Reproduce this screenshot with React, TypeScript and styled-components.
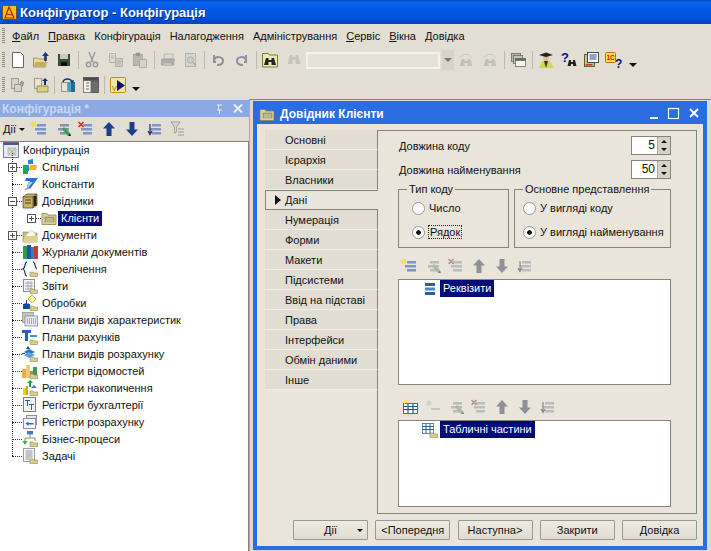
import React from 'react';
import styled, { createGlobalStyle } from 'styled-components';

const Global = createGlobalStyle`
  html, body { margin: 0; padding: 0; overflow: hidden; background: #e2ded4; }
  * { box-sizing: border-box; }
`;

const UI_FONT = `"Liberation Sans", Arial, sans-serif`;

const Corner = () => <path d="M8 11h3l1 1h3.500v3.500H8z" fill="#d8cd8c" stroke="#8f8a58" strokeWidth=".6" />;
const Bars = ({ c = '#7f94c8' }: { c?: string }) => (
  <g fill={c}>
    <rect x="5" y="3" width="9" height="2.500" />
    <rect x="3" y="7" width="11" height="2.500" />
    <rect x="5" y="11" width="9" height="2.500" />
  </g>
);

const glyphs: Record<string, React.ReactNode> = {
  // toolbar
  new: <path d="M2.500 0.500h8l3 3v12h-11z" fill="#fff" stroke="#666" />,
  open: (
    <g>
      <path d="M0.500 6h4l1 1h7v8H0.500z" fill="#e8d890" stroke="#8a7a40" strokeWidth=".7" />
      <path d="M0.500 15l2-5h12l-2 5z" fill="#c4b060" />
      <path d="M12.500 0l3.500 4h-2.200v5h-2.600V4H9z" fill="#123a78" />
    </g>
  ),
  save: (
    <g>
      <rect x="2" y="2" width="12" height="12" fill="#3c4a38" />
      <rect x="4" y="2" width="8" height="5" fill="#c8ccb8" />
      <rect x="5" y="10" width="6" height="4" fill="#111" />
    </g>
  ),
  cut: (
    <g fill="none" stroke="#9a9a9a" strokeWidth="1.400">
      <path d="M5 0l4 10M11 0l-4 10" />
      <circle cx="4.500" cy="12.500" r="2.200" />
      <circle cx="11.500" cy="12.500" r="2.200" />
    </g>
  ),
  copy: (
    <g fill="#dedad0" stroke="#a8a8a0" strokeWidth=".8">
      <path d="M1.500 1.500h6v9h-6z" />
      <path d="M7.500 6.500h7v8h-7z" fill="#c8c8c0" />
      <path d="M3 4h3M3 6h3M9 9h4M9 11h4" stroke="#aaa" />
    </g>
  ),
  paste: (
    <g stroke="#a2a29a" strokeWidth=".8">
      <rect x="1.500" y="2.500" width="9" height="11" fill="#b8b8ac" />
      <rect x="4" y="1" width="4" height="3" fill="#8e8e86" />
      <path d="M7.500 7.500h7v8h-7z" fill="#d4d4cc" />
    </g>
  ),
  print: (
    <g stroke="#a4a49c" strokeWidth=".7">
      <path d="M4 2h9v5H4z" fill="#dedad2" />
      <path d="M1.500 7h13l-1 6h-12z" fill="#aeaea8" />
      <rect x="3" y="11" width="9" height="2" fill="#d4d4cc" />
    </g>
  ),
  preview: (
    <g stroke="#a8a8a0" strokeWidth=".8">
      <path d="M2.500 1.500h10v13h-10z" fill="#d8d6cc" />
      <circle cx="7.500" cy="8" r="3.200" fill="#c6ccd0" />
      <path d="M10 10.500l3 3" strokeWidth="1.400" />
    </g>
  ),
  undo: <path d="M4 3v7h2M4 8c1-4 9-4 9 1 0 3-3 4-6 4" fill="none" stroke="#8a90a0" strokeWidth="2" />,
  redo: <path d="M12 3v7h-2M12 8c-1-4-9-4-9 1 0 3 3 4 6 4" fill="none" stroke="#8a90a0" strokeWidth="2" />,
  findFolder: (
    <g>
      <path d="M0.500 1.500h6l1 1.500h8v12h-15z" fill="#eeeaa0" stroke="#7a7a3a" />
      <path d="M4 6h2.500v7H2zM9.500 6H12l2 7H9.500zM6.500 8h3v2h-3z" fill="#223" />
    </g>
  ),
  binoc: <path d="M4 3h2.500v9H1.500zM9.500 3H12l2.500 9h-5zM6.500 5h3v3h-3z" fill="#aaa" />,
  findPrev: (
    <g>
      <path d="M4 7h2.500v7H1.500zM9.500 7H12l2.500 7h-5zM6.500 9h3v2h-3z" fill="#a2a29a" />
      <path d="M1.500 6c3-5 10-5 13 0" fill="none" stroke="#b0b0a8" />
    </g>
  ),
  windows: (
    <g stroke="#6a6a66" strokeWidth=".8">
      <rect x="1.500" y="1.500" width="9" height="8" fill="#b8b8b0" />
      <rect x="3.500" y="3.500" width="9" height="8" fill="#c4c4bc" />
      <rect x="5.500" y="6.500" width="10" height="8" fill="#f4f4ee" />
      <rect x="5.500" y="6.500" width="10" height="2" fill="#66665e" />
    </g>
  ),
  student: (
    <g>
      <path d="M1 16l3-7h8l4 7z" fill="#d8d840" />
      <path d="M6 9l2 7 2-7z" fill="#334" />
      <circle cx="8" cy="6" r="3" fill="#e8b890" />
      <path d="M1 3l7-2.500L15 3 8 5z" fill="#222" />
    </g>
  ),
  helpBinoc: (
    <g>
      <text x="0" y="10" fontFamily="Liberation Sans" fontWeight="700" fontSize="13" fill="#101080">?</text>
      <path d="M8 8h2v6H6.500zM12 8h2l1.500 6H12zM10 10h2v2h-2z" fill="#222" />
    </g>
  ),
  helpDoc: (
    <g>
      <rect x="1.500" y="2.500" width="10" height="12" fill="#c4c090" stroke="#60603a" />
      <rect x="4.500" y="0.500" width="11" height="10" fill="#fff" stroke="#222" strokeWidth=".8" />
      <path d="M6.500 3h7M6.500 5h7M6.500 7h7" stroke="#2040a0" />
      <rect x="2.500" y="12" width="7" height="1.600" fill="#c04030" />
    </g>
  ),
  help1c: (
    <g>
      <rect x="0.500" y="0.500" width="10" height="10" rx="1" fill="#fbe23c" stroke="#c07020" />
      <text x="1.500" y="8" fontFamily="Liberation Sans" fontWeight="700" fontSize="6.500" fill="#d01010">1C</text>
      <text x="10" y="15.500" fontFamily="Liberation Sans" fontWeight="700" fontSize="12" fill="#101080">?</text>
    </g>
  ),
  config2a: (
    <g stroke="#8c8c84" strokeWidth=".8" fill="#d4d4c8">
      <path d="M1.500 1.500h7v10h-7z" />
      <path d="M4.500 7.500h7v7h-7z" />
      <path d="M12 4l2 2h-1v3h-2V6h-1z" fill="#a8a898" />
    </g>
  ),
  config2b: (
    <g>
      <path d="M1.500 1.500h7v10h-7z" fill="#e8e4d0" stroke="#8c8c84" strokeWidth=".8" />
      <path d="M4 9h11v6H4z" fill="#dccf80" stroke="#7a7440" strokeWidth=".7" />
      <path d="M12 1l3 3h-2v4h-2V4H9z" fill="#12306c" />
    </g>
  ),
  refresh: (
    <g>
      <rect x="1.500" y="5.500" width="6" height="9" fill="#e8e4d0" stroke="#777" strokeWidth=".7" />
      <rect x="8" y="5" width="7" height="10" fill="#4a9fc4" />
      <rect x="11" y="5" width="4" height="10" fill="#1c6e9c" />
      <path d="M3 5c1-4 8-4 9 0" fill="none" stroke="#123a78" strokeWidth="1.400" />
      <path d="M10 4l3 2 1-3z" fill="#123a78" />
    </g>
  ),
  form: (
    <g stroke="#555" strokeWidth=".7">
      <rect x="0.500" y="0.500" width="15" height="15" fill="#f2f2ea" />
      <rect x="0.500" y="0.500" width="15" height="3" fill="#4a4a54" />
      <rect x="8" y="4" width="7.500" height="11.500" fill="#6e6e6a" />
      <path d="M3 6h3M3 9h3M3 12h3" stroke="#333" />
    </g>
  ),
  play: (
    <g>
      <rect x="0.500" y="0.500" width="15" height="15" rx="1" fill="#f2e6a0" stroke="#c08a20" />
      <text x="2" y="14" fontFamily="Liberation Sans" fontSize="7" fill="#a06020">V</text>
      <path d="M7 3l8 5.500L7 14z" fill="#101070" />
    </g>
  ),
  // list editing
  add: (
    <g>
      <Bars />
      <path d="M1 0.500l1 1.500 1.800-.5-.8 1.800 1 1.500-2-.2-1 1.500-.4-2L-1.500 3.500 0.500 3z" fill="#f8ec40" stroke="#e8c820" strokeWidth=".4" />
    </g>
  ),
  edit: (
    <g>
      <Bars c="#8490b0" />
      <path d="M7 8l2-2 6 6-2 3z" fill="#3aa050" />
      <path d="M13 15l2-3 1 3z" fill="#222" />
    </g>
  ),
  del: (
    <g>
      <Bars />
      <path d="M0.500 1l5 5M5.500 1l-5 5" stroke="#e02818" strokeWidth="1.600" />
    </g>
  ),
  up: <path d="M8 1l6 6.500h-3.500V15h-5V7.500H2z" fill="#1c3f88" />,
  down: <path d="M8 15l6-6.500h-3.500V1h-5v7.500H2z" fill="#1c3f88" />,
  move: (
    <g>
      <Bars />
      <path d="M3 3v9M1 10l2 3.500L5 10" fill="none" stroke="#20305c" strokeWidth="1.200" />
    </g>
  ),
  filter: (
    <g>
      <path d="M1 1h9L6.500 6v5l-2 1V6z" fill="#d8d8d0" stroke="#8a8a84" strokeWidth=".7" />
      <path d="M8 8h6M8 11h6M8 14h6" stroke="#9a9a94" strokeWidth="1.200" />
    </g>
  ),
  attrs: (
    <g>
      <rect x="3" y="2" width="10" height="3" fill="#2c5d9c" />
      <rect x="3" y="6.500" width="10" height="3" fill="#5488c0" />
      <rect x="3" y="11" width="10" height="3" fill="#2c5d9c" />
    </g>
  ),
  addTable: (
    <g>
      <rect x="1.500" y="4.500" width="14" height="10" fill="#fff" stroke="#3a6ea8" />
      <path d="M1.500 7.500h14M1.500 10.500h14M6 4.500v10M11 4.500v10" stroke="#1c5a98" strokeWidth="1.200" />
      <path d="M2.500 0l1 1.500 1.800-.5-.8 1.800 1 1.500-2-.2-1 1.500-.4-2-1.800-.5 2-.6z" fill="#f8ec40" />
    </g>
  ),
  addSmall: (
    <g>
      <circle cx="4" cy="4" r="2.500" fill="#bcbcb4" />
      <rect x="6" y="9" width="9" height="2" fill="#a8a8a0" />
    </g>
  ),
  tables: (
    <g>
      <rect x="0.500" y="1.500" width="11" height="10" fill="#fff" stroke="#3a6ea8" strokeWidth=".8" />
      <path d="M0.500 4.500h11M0.500 7.500h11M4 1.500v10M8 1.500v10" stroke="#2a5c98" />
      <Corner />
    </g>
  ),
  // tree
  root: (
    <g>
      <rect x="0.500" y="0.500" width="15" height="15" fill="#e8ecf4" stroke="#7e7e96" />
      <rect x="0.500" y="0.500" width="15" height="2.500" fill="#54548c" />
      <path d="M5 6h8v7H5z" fill="#d6dce6" stroke="#9a9ab0" strokeWidth=".6" />
      <path d="M6 12l6-5M6 7l6 5" stroke="#c8b050" />
    </g>
  ),
  common: (
    <g>
      <path d="M6 1l5-1v5H6z" fill="#2f82d0" />
      <path d="M1 6h6v6H1z" fill="#2a9aa0" />
      <path d="M1 9h5v6H1z" fill="#30a040" />
      <path d="M8 6h7l-1 5H7z" fill="#f0b818" />
    </g>
  ),
  constant: (
    <g>
      <path d="M4 2h12l-8 11-3-3 3-5H3z" fill="#2a72c8" />
      <path d="M6 6h5l-5 6z" fill="#9cc8f0" />
      <path d="M2 14l4-3 1 2z" fill="#7a8ea8" />
    </g>
  ),
  catalog: (
    <g>
      <path d="M1 4l4-3h10v11l-4 3H1z" fill="#c8b26a" stroke="#4a3c18" strokeWidth=".7" />
      <path d="M11 15V4H1M11 4l4-3" fill="none" stroke="#4a3c18" strokeWidth=".7" />
      <rect x="11.500" y="3" width="3" height="10" fill="#2a2414" />
      <path d="M3 7h6M3 10h6" stroke="#4a3c18" />
    </g>
  ),
  client: (
    <g>
      <path d="M1 3.500h5l1 1.500h8v9.500H1z" fill="#dcd28e" stroke="#8a8448" strokeWidth=".8" />
      <rect x="4" y="7" width="9" height="5" fill="#a4a474" stroke="#777" strokeWidth=".4" />
      <path d="M5 9h7M5 11h7" stroke="#e8e4c8" strokeWidth=".7" />
    </g>
  ),
  doc: (
    <g>
      <path d="M1 5h5l1 1h8v9H1z" fill="#c8bc70" stroke="#8a8448" strokeWidth=".6" />
      <path d="M3 9l6-6 5 4-2 4z" fill="#f8f8f0" stroke="#aaa" strokeWidth=".5" />
      <path d="M1 15l2-6h12v6z" fill="#dcd28e" />
    </g>
  ),
  journal: (
    <g>
      <rect x="1" y="2" width="4" height="13" fill="#2e9a50" />
      <rect x="5" y="1" width="4" height="14" fill="#2050b0" />
      <rect x="9" y="3" width="3" height="12" fill="#4078c8" />
      <rect x="12" y="2" width="4" height="13" fill="#c83c38" />
    </g>
  ),
  enum: (
    <g>
      <path d="M5 1C2 1 4 7 1 8c3 1 1 7 4 7M11 1c3 0 1 6 4 7" fill="none" stroke="#20305c" strokeWidth="1.200" />
      <Corner />
    </g>
  ),
  report: (
    <g>
      <rect x="1.500" y="1.500" width="11" height="12" fill="#f2f2ee" stroke="#8c8ca4" />
      <path d="M3 5h8M3 8h8M3 11h8M6 3v9M9 3v9" stroke="#a8a8c0" />
      <Corner />
    </g>
  ),
  process: (
    <g>
      <path d="M10 0l4 4-4 4-4-4z" fill="#fcf4b0" stroke="#c8b040" />
      <rect x="1" y="9" width="7" height="5" fill="#1848a8" />
      <path d="M4.500 5v5M2.500 8l2 2 2-2" fill="none" stroke="#1848a8" />
      <Corner />
    </g>
  ),
  charPlan: (
    <g>
      <rect x="0.500" y="0.500" width="11" height="10" fill="#c8c8c0" stroke="#8a8a84" strokeWidth=".7" />
      <rect x="3" y="4" width="12.500" height="10" fill="#e8eaf0" stroke="#6c7ca4" strokeWidth=".7" />
      <path d="M5 7h9M5 9h9M5 11h9" stroke="#6a6a84" strokeDasharray="1 1" />
    </g>
  ),
  accounts: (
    <g>
      <path d="M0 1h9v3H6v8H3V4H0z" fill="#2860b8" />
      <path d="M8 6h7v2H8z" fill="#3a98c8" />
      <Corner />
    </g>
  ),
  calc: (
    <g>
      <path d="M2 6l5-3 6 3-6 3z" fill="#2c78c8" />
      <path d="M2 9l5-3 6 3-6 3z" fill="#5aa0e0" />
      <path d="M6 0l2 3H4zM0 7h3v1H0z" fill="#2c5090" />
      <Corner />
    </g>
  ),
  regInfo: (
    <g>
      <rect x="0" y="6" width="4" height="9" fill="#f2a850" />
      <rect x="4" y="2" width="4" height="13" fill="#f8c878" />
      <rect x="8" y="8" width="3" height="7" fill="#6ab060" />
      <rect x="11" y="4" width="4" height="11" fill="#3c9850" />
      <Corner />
    </g>
  ),
  regAcc: (
    <g>
      <path d="M8 0l3 3H9v4H7V3H5z" fill="#20a040" />
      <rect x="1" y="8" width="3" height="7" fill="#e8d020" />
      <rect x="4" y="6" width="2" height="9" fill="#c8a820" />
      <path d="M12 5l3 3h-6z" fill="#3a7ac0" />
      <Corner />
    </g>
  ),
  regBook: (
    <g>
      <rect x="1.500" y="0.500" width="12" height="14" fill="#f2f2f2" stroke="#7c7c98" />
      <path d="M3 3h5v1H6v5H5V4H3zM7 7h5v1h-2v5H9V8H7z" fill="#2860b0" />
    </g>
  ),
  regCalc: (
    <g>
      <rect x="4.500" y="1.500" width="10" height="9" fill="#e4e4ec" stroke="#8c8ca4" />
      <rect x="1.500" y="4.500" width="12" height="10" fill="#f6f6f8" stroke="#8c8ca4" />
      <path d="M3.500 9.500l3-2v1.500h5v1.500h-5v1.500z" fill="#2c70c0" />
    </g>
  ),
  bp: (
    <g>
      <rect x="5" y="0" width="6" height="3.500" fill="#3c7ad0" />
      <path d="M8 3.500V7M3 12V7h10v3" fill="none" stroke="#8a8a60" />
      <path d="M0.500 10h5L3 14z" fill="#30b050" />
      <Corner />
    </g>
  ),
  task: (
    <g>
      <rect x="1.500" y="0.500" width="11" height="13" fill="#f8f8f4" stroke="#9a9ab0" />
      <path d="M3.500 3h7M3.500 5h7M3.500 7h7M3.500 9h7M3.500 11h4" stroke="#8c8ca4" />
      <Corner />
    </g>
  ),
};

const Svg = styled.svg<{ $muted?: boolean; $size?: number }>`
  width: ${(p) => p.$size ?? 16}px;
  height: ${(p) => p.$size ?? 16}px;
  flex: none;
  display: block;
  overflow: visible;
  ${(p) => (p.$muted ? 'filter: grayscale(0.7) opacity(0.5);' : '')}
`;

const Glyph = ({ name, muted, size }: { name: string; muted?: boolean; size?: number }) => (
  <Svg viewBox="0 0 16 16" $muted={muted} $size={size}>
    {glyphs[name]}
  </Svg>
);

const Screen = styled.div`
  width: 711px;
  height: 551px;
  display: flex;
  flex-direction: column;
  overflow: hidden;
  background: #e2ded4;
  font: 11px ${UI_FONT};
  color: #111;
`;

const TitleBar = styled.div`
  height: 24px;
  flex: none;
  display: flex;
  align-items: center;
  gap: 3px;
  padding-left: 2px;
  background: linear-gradient(180deg, #0048c4 0, #0a62ec 10%, #0058e4 40%, #0052de 75%, #0344c0 100%);
  color: #fff;
  font: bold 13px ${UI_FONT};
  text-shadow: 1px 1px 0 #0a2a80;
`;

const AppLogo = styled.svg`
  width: 15px;
  height: 15px;
`;

const MenuBar = styled.div`
  height: 23px;
  flex: none;
  display: flex;
  align-items: center;
  padding-left: 2px;
`;

const Grip = styled.span<{ $gap: number }>`
  width: 3px;
  height: 16px;
  flex: none;
  margin-right: ${(p) => p.$gap}px;
  background: repeating-linear-gradient(180deg, #8c8a82 0 1px, #e2ded4 1px 2px);
`;

const MenuItem = styled.span`
  margin-right: 9px;
  white-space: nowrap;
  u {
    text-underline-offset: 1px;
  }
`;

const ToolRow = styled.div<{ $lift?: boolean }>`
  height: 26px;
  flex: none;
  display: flex;
  align-items: center;
  padding-left: 2px;
  padding-bottom: ${(p) => (p.$lift ? 2 : 0)}px;
`;

const ToolBtn = styled.span<{ $w?: number }>`
  width: ${(p) => p.$w ?? 24}px;
  height: 20px;
  flex: none;
  display: flex;
  align-items: center;
  justify-content: center;
`;

const ToolSep = styled.span`
  width: 1px;
  height: 18px;
  flex: none;
  margin: 0 1.500px;
  background: #bdb9ae;
`;

const Caret = styled.span<{ $gap: number }>`
  width: 0;
  height: 0;
  flex: none;
  align-self: flex-end;
  margin: 0 0 6px ${(p) => p.$gap}px;
  border: 4px solid transparent;
  border-bottom-width: 0;
  border-top: 4px solid #111;
`;

const Combo = styled.span`
  width: 134px;
  height: 17px;
  flex: none;
  margin-right: 2px;
  background: #e6e2d8;
  border: 2px solid #f4f2ec;
`;

const ComboArrow = styled.span`
  width: 12px;
  height: 20px;
  flex: none;
  display: flex;
  align-items: center;
  justify-content: center;
  background: #d8d4ca;
  &::before {
    content: '';
    border: 4px solid transparent;
    border-bottom-width: 0;
    border-top: 4px solid #77756e;
  }
`;

const Work = styled.div`
  flex: 1;
  min-height: 0;
  display: flex;
`;

const Side = styled.section`
  width: 249px;
  flex: none;
  display: flex;
  flex-direction: column;
  padding-top: 1px;
`;

const SideHead = styled.div`
  height: 17px;
  flex: none;
  display: flex;
  align-items: center;
  padding: 0 4px 0 2px;
  background: #8caae2;
  color: #c8d8f2;
  font-weight: bold;
  font-size: 12px;
`;

const HeadTitle = styled.span`
  flex: 1;
`;

const SideTools = styled.div`
  height: 24px;
  flex: none;
  display: flex;
  align-items: center;
  padding-left: 3px;
`;

const DropLabel = styled.span`
  display: flex;
  align-items: center;
  gap: 3px;
  width: 25px;
  &::after {
    content: '';
    border: 3px solid transparent;
    border-bottom-width: 0;
    border-top: 3px solid #111;
  }
`;

const SideBtn = styled.span`
  width: 23px;
  display: flex;
  justify-content: center;
`;

const Tree = styled.div`
  flex: 1;
  background: #fff;
  border: 1px solid #85837a;
  border-left: 0;
  border-bottom: 0;
`;

const Branch = styled.div`
  position: relative;
  &::before {
    content: '';
    position: absolute;
    left: 12px;
    top: -6px;
    bottom: 9px;
    border-left: 1px dotted #333;
  }
`;

const Row = styled.div<{ $depth: number; $stub?: boolean }>`
  height: 17px;
  display: flex;
  align-items: center;
  position: relative;
  padding-bottom: 1px;
  padding-left: ${(p) => (p.$depth === 0 ? 3 : p.$depth === 1 ? 8 : 27)}px;
  ${(p) =>
    p.$stub
      ? `&::before {
    content: '';
    position: absolute;
    left: ${p.$depth === 1 ? 12 : 31}px;
    width: 10px;
    top: 8px;
    border-top: 1px dotted #333;
  }`
      : ''}
`;

const Expander = styled.span<{ $open?: boolean; $empty?: boolean }>`
  width: 9px;
  height: 9px;
  flex: none;
  margin-right: 5px;
  position: relative;
  z-index: 1;
  ${(p) =>
    p.$empty
      ? ''
      : `border: 1px solid #555;
  background: linear-gradient(#555, #555) center / 5px 1px no-repeat, #fff;`}
  ${(p) =>
    !p.$empty && !p.$open
      ? `&::after {
    content: '';
    position: absolute;
    left: 3px;
    top: 1px;
    width: 1px;
    height: 5px;
    background: #555;
  }`
      : ''}
`;

const RowIcon = styled.span`
  position: relative;
  z-index: 1;
  display: flex;
  background: #fff;
`;

const RowText = styled.span<{ $selected?: boolean }>`
  margin-left: ${(p) => (p.$selected ? 1 : 4)}px;
  padding: ${(p) => (p.$selected ? '1px 3px 2px' : '0')};
  background: ${(p) => (p.$selected ? '#000a78' : 'transparent')};
  color: ${(p) => (p.$selected ? '#fff' : '#111')};
  white-space: nowrap;
`;

const Mdi = styled.div`
  flex: 1;
  min-width: 0;
  display: flex;
  padding: 1px 4px 1px 3px;
  background: #dcd8ce;
  border-top: 1px solid #85837a;
  border-left: 1px solid #aaa89e;
`;

const Dialog = styled.section`
  flex: 1;
  display: flex;
  flex-direction: column;
  background: #e9e5db;
  border: 4px solid #2a6ce2;
  border-top: 0;
`;

const DialogHead = styled.div`
  height: 23px;
  flex: none;
  display: flex;
  align-items: center;
  gap: 5px;
  margin: 0 -4px;
  padding: 2px 6px 0 6px;
  background: #2a6ce2;
  color: #fff;
  font: bold 12px ${UI_FONT};
`;

const DialogBody = styled.div`
  flex: 1;
  min-height: 0;
  display: flex;
  flex-direction: column;
  padding: 6px 6px 6px 8px;
`;

const Columns = styled.div`
  flex: 1;
  min-height: 0;
  display: flex;
`;

const TabList = styled.div`
  width: 113px;
  flex: none;
  position: relative;
  z-index: 1;
  margin-right: -1px;
  align-self: flex-start;
`;

const Tab = styled.div<{ $active?: boolean }>`
  height: 20px;
  display: flex;
  align-items: center;
  padding-left: 20px;
  position: relative;
  ${(p) =>
    p.$active
      ? `background: #e9e5db;
  border: 1px solid #85837a;
  border-right: 0;
  padding-left: 19px;`
      : `background: #e1ddd2;
  border-bottom: 1px solid #f0ede5;
  border-right: 1px solid #85837a;`}
`;

const Pointer = styled.span`
  position: absolute;
  left: 9px;
  top: 4px;
  border: 5px solid transparent;
  border-right-width: 0;
  border-left: 6px solid #111;
`;

const Panel = styled.div`
  flex: 1;
  min-width: 0;
  display: flex;
  flex-direction: column;
  border: 1px solid #85837a;
  padding: 5px 25px 5px 20px;
`;

const FieldRow = styled.div`
  height: 19px;
  flex: none;
  margin-bottom: 5px;
  padding-left: 1px;
  display: flex;
  align-items: center;
  justify-content: space-between;
`;

const Spinner = styled.div`
  width: 40px;
  height: 19px;
  display: flex;
  background: #fff;
  border: 1px solid #85837a;
`;

const SpinValue = styled.span`
  flex: 1;
  text-align: right;
  padding-right: 2px;
  line-height: 17px;
  font-size: 12px;
`;

const SpinArrows = styled.span`
  width: 13px;
  display: flex;
  flex-direction: column;
  border-left: 1px solid #aaa89e;
  background: #d6d2c6;
`;

const SpinArrow = styled.span<{ $down?: boolean }>`
  flex: 1;
  display: flex;
  align-items: center;
  justify-content: center;
  &::before {
    content: '';
    border: 3px solid transparent;
    ${(p) => (p.$down ? 'border-bottom-width: 0; border-top: 3px solid #111;' : 'border-top-width: 0; border-bottom: 3px solid #111;')}
  }
`;

const Groups = styled.div`
  flex: none;
  display: grid;
  grid-template-columns: 111px 157px;
  gap: 5px;
  margin-top: -1px;
`;

const Group = styled.fieldset<{ $inset: number }>`
  height: 65px;
  margin: 0;
  min-width: 0;
  padding: 0 0 0 ${(p) => p.$inset}px;
  border: 1px solid #85837a;
  display: flex;
  flex-direction: column;
  legend {
    margin-left: ${(p) => 8 - p.$inset}px;
  }
`;

const GroupLegend = styled.legend`
  padding: 0 2px;
  line-height: 13px;
  white-space: nowrap;
`;

const Option = styled.label`
  height: 24px;
  flex: none;
  display: flex;
  align-items: center;
  gap: 4px;
  white-space: nowrap;
`;

const Radio = styled.span<{ $on?: boolean }>`
  width: 13px;
  height: 13px;
  flex: none;
  border-radius: 50%;
  border: 1px solid #9a9890;
  background: ${(p) =>
    p.$on ? 'radial-gradient(circle, #111 0 2px, #fff 2.600px)' : '#fff'};
`;

const Focused = styled.span`
  outline: 1px dotted #222;
  padding: 0 1px;
`;

const ListTools = styled.div<{ $gap: number }>`
  height: 24px;
  flex: none;
  display: flex;
  align-items: center;
  margin-top: ${(p) => p.$gap}px;
  padding: 0 0 3px 4px;
`;

const ListBtn = styled.span`
  width: 23px;
  display: flex;
`;

const ListBox = styled.div<{ $h: number }>`
  height: ${(p) => p.$h}px;
  flex: none;
  background: #fff;
  border: 1px solid #85837a;
  padding-left: 23px;
`;

const ListRow = styled.div`
  height: 17px;
  display: flex;
  align-items: center;
  gap: 2px;
`;

const IconSlot = styled.span`
  width: 16px;
  display: flex;
`;

const Picked = styled.span`
  height: 17px;
  padding: 0 3px;
  line-height: 16px;
  background: #000a78;
  color: #fff;
  white-space: nowrap;
`;

const Footer = styled.div`
  height: 20px;
  flex: none;
  margin-top: 6px;
  padding-left: 28px;
  display: flex;
  gap: 7.250px;
`;

const Btn = styled.button`
  width: 75px;
  height: 20px;
  padding: 0;
  position: relative;
  border: 1px solid #9a9890;
  border-radius: 1px;
  background: linear-gradient(#eeebe2, #e0dcd0);
  font: 11px ${UI_FONT};
  color: #111;
`;

const BtnCaret = styled.span`
  position: absolute;
  right: 4px;
  top: 8px;
  border: 3px solid transparent;
  border-bottom-width: 0;
  border-top: 3px solid #111;
`;

const tree = [
  ['Спільні', 'common', 'plus'],
  ['Константи', 'constant', ''],
  ['Довідники', 'catalog', 'open'],
  ['Клієнти', 'client', 'child'],
  ['Документи', 'doc', 'plus'],
  ['Журнали документів', 'journal', ''],
  ['Перелічення', 'enum', ''],
  ['Звіти', 'report', ''],
  ['Обробки', 'process', ''],
  ['Плани видів характеристик', 'charPlan', ''],
  ['Плани рахунків', 'accounts', ''],
  ['Плани видів розрахунку', 'calc', ''],
  ['Регістри відомостей', 'regInfo', ''],
  ['Регістри накопичення', 'regAcc', ''],
  ['Регістри бухгалтерії', 'regBook', ''],
  ['Регістри розрахунку', 'regCalc', ''],
  ['Бізнес-процеси', 'bp', ''],
  ['Задачі', 'task', ''],
];

const tabs = ['Основні', 'Ієрархія', 'Власники', 'Дані', 'Нумерація', 'Форми', 'Макети', 'Підсистеми', 'Ввід на підставі', 'Права', 'Інтерфейси', 'Обмін даними', 'Інше'];

const ActionRow = ({ names, gap }: { names: [string, boolean][]; gap: number }) => (
  <ListTools $gap={gap}>
    {names.map(([n, muted], i) => (
      <ListBtn key={i}>
        <Glyph name={n} muted={muted} />
      </ListBtn>
    ))}
  </ListTools>
);

export default function App() {
  return (
    <Screen>
      <Global />
      <TitleBar>
        <AppLogo viewBox="0 0 15 15">
          <rect x="0.500" y="0.500" width="14" height="14" fill="#f0c020" stroke="#7a5010" />
          <path d="M7 2L3 13h9zM5 9l5 1" fill="none" stroke="#c01818" strokeWidth="1.200" />
        </AppLogo>
        Конфігуратор - Конфігурація
      </TitleBar>
      <MenuBar>
        <Grip $gap={7} />
        <MenuItem><u>Ф</u>айл</MenuItem>
        <MenuItem><u>П</u>равка</MenuItem>
        <MenuItem>Конфігурація</MenuItem>
        <MenuItem>Налагодження</MenuItem>
        <MenuItem>Адміністрування</MenuItem>
        <MenuItem><u>С</u>ервіс</MenuItem>
        <MenuItem><u>В</u>ікна</MenuItem>
        <MenuItem><u>Д</u>овідка</MenuItem>
      </MenuBar>
      <ToolRow>
        <Grip $gap={1} />
        <ToolBtn><Glyph name="new" /></ToolBtn>
        <ToolBtn $w={22}><Glyph name="open" /></ToolBtn>
        <ToolBtn><Glyph name="save" /></ToolBtn>
        <ToolSep />
        <ToolBtn><Glyph name="cut" /></ToolBtn>
        <ToolBtn><Glyph name="copy" /></ToolBtn>
        <ToolBtn><Glyph name="paste" /></ToolBtn>
        <ToolSep />
        <ToolBtn><Glyph name="print" /></ToolBtn>
        <ToolBtn $w={22}><Glyph name="preview" /></ToolBtn>
        <ToolSep />
        <ToolBtn><Glyph name="undo" /></ToolBtn>
        <ToolBtn><Glyph name="redo" /></ToolBtn>
        <ToolSep />
        <ToolBtn><Glyph name="findFolder" /></ToolBtn>
        <ToolBtn><Glyph name="binoc" muted /></ToolBtn>
        <Combo />
        <ComboArrow />
        <ToolBtn><Glyph name="findPrev" muted /></ToolBtn>
        <ToolBtn><Glyph name="findPrev" muted /></ToolBtn>
        <ToolSep />
        <ToolBtn><Glyph name="windows" /></ToolBtn>
        <ToolSep />
        <ToolBtn><Glyph name="student" /></ToolBtn>
        <ToolBtn $w={22}><Glyph name="helpBinoc" /></ToolBtn>
        <ToolBtn $w={22}><Glyph name="helpDoc" /></ToolBtn>
        <ToolBtn $w={22}><Glyph name="help1c" /></ToolBtn>
        <Caret $gap={5} />
      </ToolRow>
      <ToolRow $lift>
        <Grip $gap={1} />
        <ToolBtn><Glyph name="config2a" /></ToolBtn>
        <ToolBtn $w={22}><Glyph name="config2b" /></ToolBtn>
        <ToolSep />
        <ToolBtn><Glyph name="refresh" /></ToolBtn>
        <ToolBtn $w={22}><Glyph name="form" /></ToolBtn>
        <ToolSep />
        <ToolBtn><Glyph name="play" /></ToolBtn>
        <Caret $gap={2} />
      </ToolRow>
      <Work>
        <Side>
          <SideHead>
            <HeadTitle>Конфігурація *</HeadTitle>
            <svg width="30" height="12" viewBox="0 0 30 12">
              <path d="M2 2h5M3.500 2v5M2 7h5M4.500 7v4" stroke="#e4ecf8" fill="none" />
              <path d="M19 1.500l8 8M27 1.500l-8 8" stroke="#e8eefa" strokeWidth="2" />
            </svg>
          </SideHead>
          <SideTools>
            <DropLabel>Дії</DropLabel>
            {['add', 'edit', 'del', 'up', 'down', 'move'].map((n) => (
              <SideBtn key={n}><Glyph name={n} /></SideBtn>
            ))}
            <SideBtn><Glyph name="filter" /></SideBtn>
          </SideTools>
          <Tree>
            <Row $depth={0}>
              <Glyph name="root" />
              <RowText>Конфігурація</RowText>
            </Row>
            <Branch>
              {tree.map(([label, icon, kind]) => (
                <Row key={label} $depth={kind === 'child' ? 2 : 1} $stub>
                  <Expander $empty={kind === ''} $open={kind === 'open'} />
                  <RowIcon><Glyph name={icon} /></RowIcon>
                  <RowText $selected={kind === 'child'}>{label}</RowText>
                </Row>
              ))}
            </Branch>
          </Tree>
        </Side>
        <Mdi>
          <Dialog>
            <DialogHead>
              <Glyph name="client" />
              <HeadTitle>Довідник Клієнти</HeadTitle>
              <svg width="52" height="13" viewBox="0 0 52 13">
                <rect x="1" y="10" width="8" height="2" fill="#fff" />
                <rect x="19.500" y="1.500" width="10" height="10" fill="none" stroke="#fff" strokeWidth="1.200" />
                <path d="M41 2l8 8M49 2l-8 8" stroke="#fff" strokeWidth="2" />
              </svg>
            </DialogHead>
            <DialogBody>
              <Columns>
                <TabList>
                  {tabs.map((t) => (
                    <Tab key={t} $active={t === 'Дані'}>
                      {t === 'Дані' && <Pointer />}
                      {t}
                    </Tab>
                  ))}
                </TabList>
                <Panel>
                  <FieldRow>
                    Довжина коду
                    <Spinner>
                      <SpinValue>5</SpinValue>
                      <SpinArrows><SpinArrow /><SpinArrow $down /></SpinArrows>
                    </Spinner>
                  </FieldRow>
                  <FieldRow>
                    Довжина найменування
                    <Spinner>
                      <SpinValue>50</SpinValue>
                      <SpinArrows><SpinArrow /><SpinArrow $down /></SpinArrows>
                    </Spinner>
                  </FieldRow>
                  <Groups>
                    <Group $inset={13}>
                      <GroupLegend>Тип коду</GroupLegend>
                      <Option><Radio />Число</Option>
                      <Option><Radio $on /><Focused>Рядок</Focused></Option>
                    </Group>
                    <Group $inset={8}>
                      <GroupLegend>Основне представлення</GroupLegend>
                      <Option><Radio />У вигляді коду</Option>
                      <Option><Radio $on />У вигляді найменування</Option>
                    </Group>
                  </Groups>
                  <ActionRow gap={7} names={[['add', false], ['edit', true], ['del', true], ['up', true], ['down', true], ['move', true]]} />
                  <ListBox $h={106}>
                    <ListRow>
                      <IconSlot><Glyph name="attrs" /></IconSlot>
                      <Picked>Реквізити</Picked>
                    </ListRow>
                  </ListBox>
                  <ActionRow gap={11} names={[['addTable', false], ['addSmall', true], ['edit', true], ['del', true], ['up', true], ['down', true], ['move', true]]} />
                  <ListBox $h={87}>
                    <ListRow>
                      <IconSlot><Glyph name="tables" /></IconSlot>
                      <Picked>Табличні частини</Picked>
                    </ListRow>
                  </ListBox>
                </Panel>
              </Columns>
              <Footer>
                <Btn>Дії<BtnCaret /></Btn>
                <Btn>&lt;Попередня</Btn>
                <Btn>Наступна&gt;</Btn>
                <Btn>Закрити</Btn>
                <Btn>Довідка</Btn>
              </Footer>
            </DialogBody>
          </Dialog>
        </Mdi>
      </Work>
    </Screen>
  );
}
